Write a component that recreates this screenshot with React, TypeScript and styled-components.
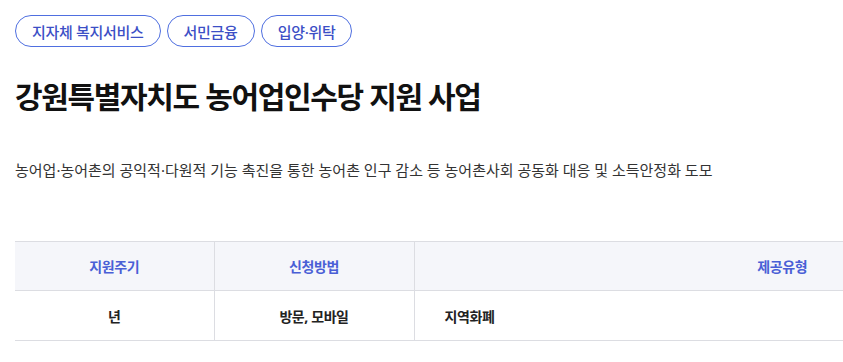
import styled, { createGlobalStyle } from 'styled-components';

const GlobalStyle = createGlobalStyle`
  html, body { margin: 0; padding: 0; background: #ffffff; }
  body {
    font-family: "Noto Sans", "Noto Sans CJK KR", sans-serif;
    color: #222222;
    overflow: hidden;
  }
`;

// ── 레이아웃 ─────────────────────────────────────────
const Page = styled.div`
  padding: 15px 0 0 15px;
  width: 1200px;
`;

const TagList = styled.ul`
  list-style: none;
  margin: 0; padding: 0;
  display: flex; gap: 6px;
`;

const Tag = styled.li`
  height: 32px;
  box-sizing: border-box;
  padding: 0 16px;
  border: 1px solid #4f6fe0;
  border-radius: 16px;
  display: flex; align-items: center;
  font-size: 15px; font-weight: 500;
  color: #3c4fc6;
  letter-spacing: -0.3px;
`;

const Title = styled.h2`
  margin: 30px 0 0;
  font-size: 30px; font-weight: 700;
  line-height: 40px;
  color: #111111;
  letter-spacing: -1.35px;
`;

const Desc = styled.p`
  margin: 41px 0 0;
  font-size: 15px; line-height: 24px;
  color: #333333;
  letter-spacing: 0;
`;

const Table = styled.table`
  margin-top: 59px;
  width: 1135px;
  border-collapse: collapse;
  table-layout: fixed;
  border-top: 1px solid #dcdde2;
  th, td {
    padding: 0;
    font-size: 14px;
    letter-spacing: -0.4px;
    border-bottom: 1px solid #dcdde2;
    border-left: 1px solid #dcdde2;
  }
  th { height: 48px; }
  td { height: 49px; }
  th:first-child, td:first-child { border-left: none; }
`;

const HeadCell = styled.th`
  background: #f5f6fa;
  color: #4a5fd6;
  font-weight: 700;
  text-align: center;
`;

const BodyCell = styled.td<{ $align?: 'left' | 'center' }>`
  color: #222222;
  font-weight: 700;
  text-align: ${({ $align }) => $align ?? 'center'};
  padding-left: ${({ $align }) => ($align === 'left' ? '30px' : '0')} !important;
`;

// ── 데이터 ─────────────────────────────────────────
const tags = ['지자체 복지서비스', '서민금융', '입양·위탁'];

export default function App() {
  return (
    <>
      <GlobalStyle />
      <Page>
        <TagList>
          {tags.map((t) => (
            <Tag key={t}>{t}</Tag>
          ))}
        </TagList>

        <Title>강원특별자치도 농어업인수당 지원 사업</Title>

        <Desc>
          농어업·농어촌의 공익적·다원적 기능 촉진을 통한 농어촌 인구 감소 등 농어촌사회 공동화 대응 및 소득안정화 도모
        </Desc>

        <Table>
          <colgroup>
            <col style={{ width: 199 }} />
            <col style={{ width: 200 }} />
            <col />
          </colgroup>
          <thead>
            <tr>
              <HeadCell>지원주기</HeadCell>
              <HeadCell>신청방법</HeadCell>
              <HeadCell>제공유형</HeadCell>
            </tr>
          </thead>
          <tbody>
            <tr>
              <BodyCell>년</BodyCell>
              <BodyCell>방문, 모바일</BodyCell>
              <BodyCell $align="left">지역화폐</BodyCell>
            </tr>
          </tbody>
        </Table>
      </Page>
    </>
  );
}
